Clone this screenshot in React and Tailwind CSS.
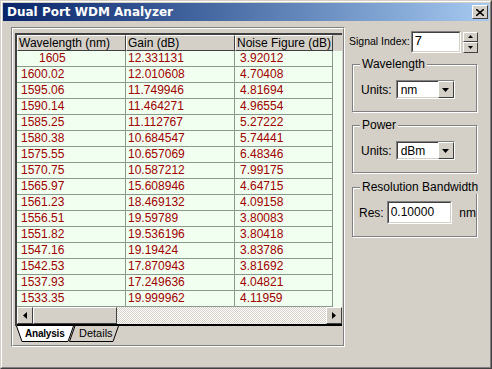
import React from "react";

const rows = [
  ["1605", "12.331131", "3.92012", true],
  ["1600.02", "12.010608", "4.70408"],
  ["1595.06", "11.749946", "4.81694"],
  ["1590.14", "11.464271", "4.96554"],
  ["1585.25", "11.112767", "5.27222"],
  ["1580.38", "10.684547", "5.74441"],
  ["1575.55", "10.657069", "6.48346"],
  ["1570.75", "10.587212", "7.99175"],
  ["1565.97", "15.608946", "4.64715"],
  ["1561.23", "18.469132", "4.09158"],
  ["1556.51", "19.59789", "3.80083"],
  ["1551.82", "19.536196", "3.80418"],
  ["1547.16", "19.19424", "3.83786"],
  ["1542.53", "17.870943", "3.81692"],
  ["1537.93", "17.249636", "4.04821"],
  ["1533.35", "19.999962", "4.11959"],
];

const raised = "border border-t-white border-l-white border-r-[#404040] border-b-[#404040]";

function Combo({ value }) {
  return (
    <div className="flex h-[19px] w-[59px] border border-t-[#808080] border-l-[#808080] border-r-white border-b-white">
      <div className="flex flex-1 items-center bg-white pl-[3px] border border-t-[#404040] border-l-[#404040] border-b-[#d4d0c8] border-r-0">
        {value}
      </div>
      <div className={`flex w-[16px] items-center justify-center bg-[#d4d0c8] ${raised}`}>
        <svg width="7" height="4" viewBox="0 0 7 4"><path d="M0 0h7L3.5 4z" fill="#000" /></svg>
      </div>
    </div>
  );
}

function Group({ title, children, className }) {
  return (
    <div className={`relative border border-[#808080] shadow-[inset_1px_1px_0_white,1px_1px_0_white] ${className}`}>
      <span className="absolute -top-[8px] left-[7px] bg-[#d4d0c8] px-[2px] leading-[14px] whitespace-nowrap">{title}</span>
      {children}
    </div>
  );
}

export default function App() {
  return (
    <div
      className="w-[492px] h-[369px] bg-[#d4d0c8] text-[12px] text-black border border-t-[#d4d0c8] border-l-[#d4d0c8] border-r-[#404040] border-b-[#404040] flex flex-col overflow-hidden"
      style={{ fontFamily: "'Liberation Sans', Arial, sans-serif" }}
    >
      <div className="border border-t-white border-l-white border-r-[#808080] border-b-[#808080] flex-1 flex flex-col p-[1px]">
        {/* title bar */}
        <div className="h-[18px] flex items-center justify-between bg-gradient-to-r from-[#0a246a] to-[#a6caf0] pl-[4px] pr-[1px]">
          <span className="text-white font-bold text-[12px] leading-none" style={{ fontFamily: "'DejaVu Sans', sans-serif" }}>Dual Port WDM Analyzer</span>
          <div className={`w-[16px] h-[14px] bg-[#d4d0c8] ${raised} flex items-center justify-center`}>
            <svg width="8" height="7" viewBox="0 0 8 7"><path d="M0 0l8 7M8 0l-8 7" stroke="#000" strokeWidth="1.6" /></svg>
          </div>
        </div>

        <div className="flex flex-1 pt-[6px]">
          {/* left tab frame */}
          <div className="ml-[8px] w-[334px] h-[320px] border border-t-[#808080] border-l-[#808080] border-r-white border-b-white flex flex-col">
            <div className="border border-t-white border-l-white border-r-[#808080] border-b-[#808080] flex-1 flex flex-col pl-[2px] pt-[4px] pr-[1px]">
              <div className="flex flex-col border-l-2 border-t-2 border-[#404040] border-r-[#808080]">
                {/* header */}
                <div className="flex h-[16px] bg-[#d4d0c8]">
                  {["Wavelength (nm)", "Gain (dB)", "Noise Figure (dB)"].map((h, i) => (
                    <div key={h} className={`${i === 2 ? "w-[98px]" : "w-[109px]"} ${raised} pl-[1px] leading-[14px] whitespace-nowrap overflow-hidden`}>
                      {h}
                    </div>
                  ))}
                  <div className="flex-1 bg-[#d4d0c8]" />
                </div>
                {/* rows */}
                <div className="flex flex-col bg-[#f0fff0] text-[#a00000]">
                  {rows.map((r) => (
                    <div key={r[0]} className="flex h-[16px]">
                      <div className={`w-[109px] border-r border-b border-[#8a9a8a] leading-[15px] ${r[3] ? "pl-[22px]" : "pl-[4px]"}`}>{r[0]}</div>
                      <div className="w-[109px] border-r border-b border-[#8a9a8a] leading-[15px] pl-[2px]">{r[1]}</div>
                      <div className="w-[98px] border-r border-b border-[#8a9a8a] leading-[15px] pl-[5px]">{r[2]}</div>
                      <div className="flex-1" />
                    </div>
                  ))}
                </div>
                {/* hscroll */}
                <div className="flex h-[17px] bg-[repeating-conic-gradient(#ffffff_0_25%,#d4d0c8_0_50%)] bg-[length:2px_2px]">
                  <div className={`w-[16px] bg-[#d4d0c8] ${raised} flex items-center justify-center`}>
                    <svg width="4" height="7" viewBox="0 0 4 7"><path d="M4 0v7L0 3.5z" fill="#000" /></svg>
                  </div>
                  <div className={`w-[84px] bg-[#d4d0c8] ${raised}`} />
                  <div className="flex-1" />
                  <div className={`w-[16px] bg-[#d4d0c8] ${raised} flex items-center justify-center`}>
                    <svg width="4" height="7" viewBox="0 0 4 7"><path d="M0 0v7l4-3.5z" fill="#000" /></svg>
                  </div>
                </div>
                <div className="h-[2px] bg-black" />
              </div>
              {/* tabs */}
              <div className="flex h-[16px] relative">
                <div className="relative h-[16px] w-[58px] ml-[1px] z-10">
                  <svg className="absolute inset-0" width="58" height="16" viewBox="0 0 58 16">
                    <path d="M0.5 0 L6 15.5 L52 15.5 L57.5 0" fill="#fff" stroke="#000" strokeWidth="1" />
                  </svg>
                  <span className="absolute left-[9px] top-[0px] font-bold leading-[15px] text-[10px] tracking-[-0.2px]">Analysis</span>
                </div>
                <div className="relative h-[16px] w-[50px] -ml-[5px]">
                  <svg className="absolute inset-0" width="50" height="16" viewBox="0 0 50 16">
                    <path d="M6 0 L0.5 15.5 L44 15.5 L49.5 0" fill="none" stroke="#000" strokeWidth="1" />
                  </svg>
                  <span className="absolute left-[10px] top-[0px] leading-[15px] text-[11px]">Details</span>
                </div>
              </div>
            </div>
          </div>

          {/* right panel */}
          <div className="ml-[4px] flex flex-col w-[132px]">
            <div className="flex items-center h-[22px] mt-[4px]">
              <span className="whitespace-nowrap text-[10.5px]">Signal Index:</span>
              <div className="ml-[1px] w-[50px] h-[22px] border border-t-[#808080] border-l-[#808080] border-r-white border-b-white">
                <div className="h-full bg-white border border-t-[#404040] border-l-[#404040] border-r-[#d4d0c8] border-b-[#d4d0c8] pl-[2px] leading-[16px] text-[13px]">7</div>
              </div>
              <div className="ml-[2px] flex flex-col w-[15px] h-[21px]">
                <div className={`flex-1 bg-[#d4d0c8] ${raised} flex items-center justify-center`}>
                  <svg width="5" height="3" viewBox="0 0 5 3"><path d="M0 3h5L2.5 0z" fill="#000" /></svg>
                </div>
                <div className={`flex-1 bg-[#d4d0c8] ${raised} flex items-center justify-center`}>
                  <svg width="5" height="3" viewBox="0 0 5 3"><path d="M0 0h5L2.5 3z" fill="#000" /></svg>
                </div>
              </div>
            </div>

            <Group title="Wavelength" className="ml-[3px] mt-[11px] w-[125px] h-[48px]">
              <div className="flex items-center gap-[4px] pl-[8px] pt-[15px]">
                <span>Units:</span>
                <Combo value="nm" />
              </div>
            </Group>

            <Group title="Power" className="ml-[3px] mt-[13px] w-[125px] h-[48px]">
              <div className="flex items-center gap-[4px] pl-[8px] pt-[15px]">
                <span>Units:</span>
                <Combo value="dBm" />
              </div>
            </Group>

            <Group title="Resolution Bandwidth" className="ml-[3px] mt-[14px] w-[125px] h-[50px]">
              <div className="flex items-center pl-[6px] pt-[13px]">
                <span>Res:</span>
                <div className="ml-[3px] w-[66px] h-[23px] border border-t-[#808080] border-l-[#808080] border-r-white border-b-white">
                  <div className="h-full bg-white border border-t-[#404040] border-l-[#404040] border-r-[#d4d0c8] border-b-[#d4d0c8] pl-[2px] leading-[18px]">0.10000</div>
                </div>
                <span className="ml-[7px]">nm</span>
              </div>
            </Group>
          </div>
        </div>
      </div>
    </div>
  );
}
